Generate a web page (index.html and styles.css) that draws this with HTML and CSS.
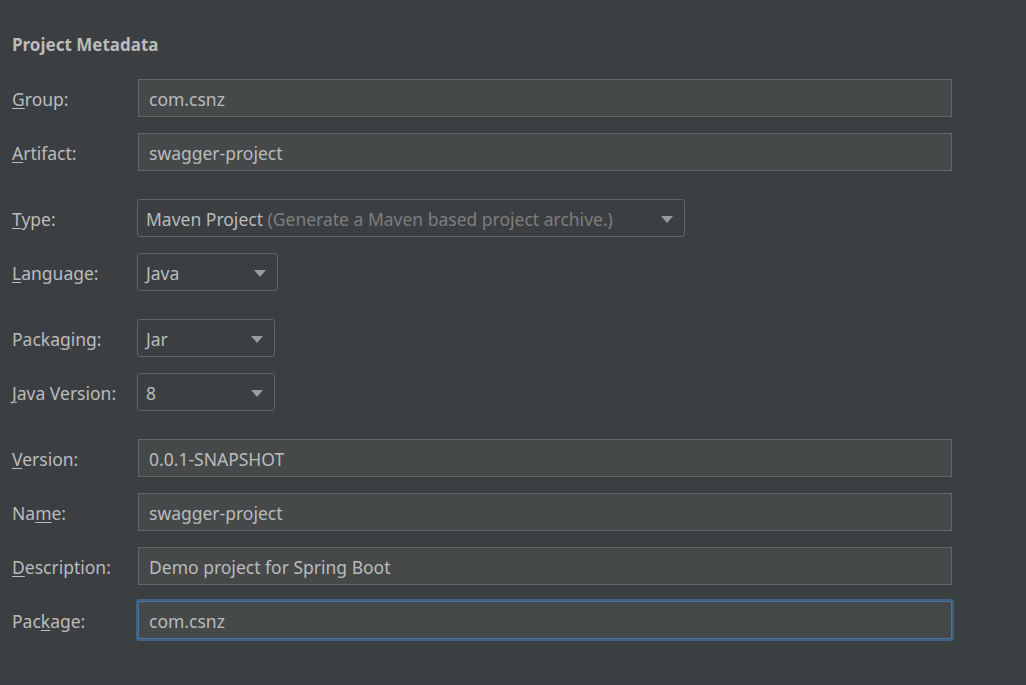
FILE: index.html
```html
<!DOCTYPE html>
<html lang="en">
<head>
<meta charset="utf-8">
<title>Project Metadata</title>
<link rel="stylesheet" href="styles.css">
</head>
<body>
<div class="page">
  <h1 class="title">Project Metadata</h1>
  <div class="sections">
    <div class="section">
      <div class="row"><span class="label"><u>G</u>roup:</span><div class="field">com.csnz</div></div>
      <div class="row"><span class="label"><u>A</u>rtifact:</span><div class="field">swagger-project</div></div>
    </div>
    <div class="section">
      <div class="row"><span class="label"><u>T</u>ype:</span>
        <div class="combo combo-type"><span class="combo-text">Maven Project <span class="hint">(Generate a Maven based project archive.)</span></span><span class="arrow"></span></div>
      </div>
      <div class="row"><span class="label"><u>L</u>anguage:</span>
        <div class="combo combo-lang"><span class="combo-text">Java</span><span class="arrow"></span></div>
      </div>
    </div>
    <div class="section">
      <div class="row"><span class="label">Packa<u>g</u>ing:</span>
        <div class="combo combo-small"><span class="combo-text">Jar</span><span class="arrow"></span></div>
      </div>
      <div class="row"><span class="label"><u>J</u>ava Version:</span>
        <div class="combo combo-small"><span class="combo-text">8</span><span class="arrow"></span></div>
      </div>
    </div>
    <div class="section">
      <div class="row"><span class="label"><u>V</u>ersion:</span><div class="field">0.0.1-SNAPSHOT</div></div>
      <div class="row"><span class="label">Na<u>m</u>e:</span><div class="field">swagger-project</div></div>
      <div class="row"><span class="label"><u>D</u>escription:</span><div class="field">Demo project for Spring Boot</div></div>
      <div class="row"><span class="label">Pac<u>k</u>age:</span><div class="field field-focus">com.csnz</div></div>
    </div>
  </div>
</div>
</body>
</html>
```

FILE: styles.css
```css
html, body {
  margin: 0;
  padding: 0;
  background: #3c3f41;
  height: 100%;
}
body {
  font-family: "Noto Sans", "Open Sans", sans-serif;
  font-size: 17.5px;
  color: #bbbbbb;
  overflow: hidden;
}
.page {
  padding: 34px 12px 0 12px;
}
.title {
  margin: 0 0 23px 0;
  font-size: 17px;
  font-weight: 700;
  line-height: 22px;
  color: #bbbbbb;
}
.sections {
  display: flex;
  flex-direction: column;
  gap: 28px;
}
.section {
  display: flex;
  flex-direction: column;
  gap: 16px;
}
.row {
  display: flex;
  align-items: flex-start;
  height: 38px;
}
.label {
  width: 126px;
  flex: none;
  box-sizing: border-box;
  height: 38px;
  padding-top: 4px;
  line-height: 32px;
  white-space: nowrap;
}
.label u {
  text-decoration: underline;
  text-decoration-thickness: 1px;
  text-underline-offset: 2px;
}
.field {
  box-sizing: border-box;
  width: 814px;
  height: 38px;
  border: 1px solid #646464;
  background: #45494a;
  padding: 3px 9px 0 10px;
  line-height: 32px;
  white-space: nowrap;
}
.field-focus {
  border-color: #4a729b;
  box-shadow: 0 0 0 2px #3d6185;
  border-radius: 1px;
}
.combo {
  box-sizing: border-box;
  height: 38px;
  margin-left: -1px;
  border: 1px solid #616465;
  border-radius: 3px;
  background: #3c3f41;
  padding: 3px 11px 0 8px;
  display: flex;
  align-items: flex-start;
  justify-content: space-between;
  line-height: 32px;
  white-space: nowrap;
}
.combo-type { width: 548px; }
.combo-lang { width: 141px; }
.combo-small { width: 138px; }
.hint {
  color: #7c7e80;
}
.arrow {
  flex: none;
  width: 0;
  height: 0;
  margin-top: 13px;
  border-left: 6.5px solid transparent;
  border-right: 6.5px solid transparent;
  border-top: 7px solid #9a9b9c;
}
```
